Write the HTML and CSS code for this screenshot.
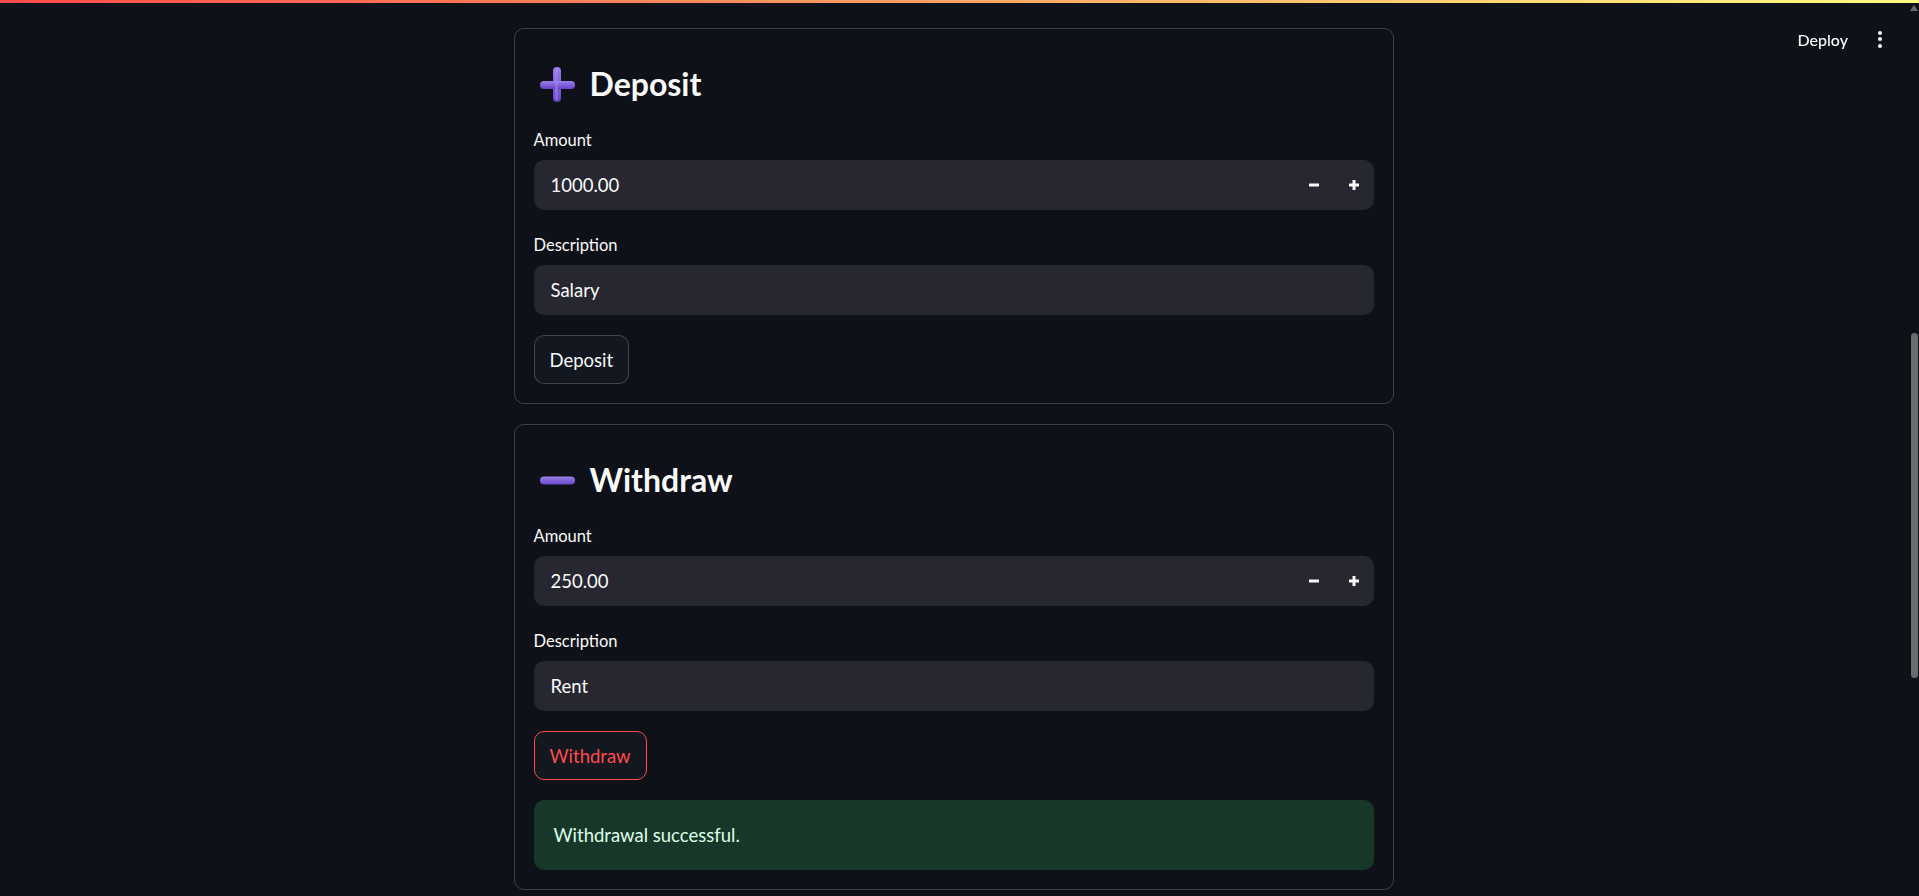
FILE: index.html
```html
<!DOCTYPE html>
<html lang="en">
<head>
<meta charset="utf-8">
<title>Bank</title>
<link rel="stylesheet" href="styles.css">
</head>
<body>
<div class="decoration"></div>
<header class="toolbar">
  <span class="deploy">Deploy</span>
  <span class="menu"><i></i><i></i><i></i></span>
</header>
<div class="app">
  <main class="main">
    <div class="block">
      <section class="card">
        <h3 class="heading">
          <svg class="emoji" width="35" height="35" viewBox="0 0 35 35">
            <defs>
              <linearGradient id="pg" x1="0" y1="0" x2="0" y2="1">
                <stop offset="0" stop-color="#9a80ea"/>
                <stop offset="0.5" stop-color="#8060da"/>
                <stop offset="1" stop-color="#6642c4"/>
              </linearGradient>
            </defs>
            <rect x="13" y="0" width="8" height="35" rx="4" fill="url(#pg)"/>
            <rect x="0" y="14" width="35" height="8" rx="4" fill="url(#pg)"/>
            <rect x="15" y="2" width="3" height="31" rx="1.5" fill="#a68cf0" opacity="0.45"/>
          </svg>
          <span>Deposit</span>
        </h3>
        <div class="field">
          <label class="label">Amount</label>
          <div class="input">
            <span class="value">1000.00</span>
            <span class="steppers">
              <span class="step"><svg width="10" height="10" viewBox="0 0 10 10"><rect x="0" y="3.5" width="10" height="3" fill="#fafafa"/></svg></span>
              <span class="step"><svg width="10" height="10" viewBox="0 0 10 10"><rect x="0" y="3.5" width="10" height="3" fill="#fafafa"/><rect x="3.5" y="0" width="3" height="10" fill="#fafafa"/></svg></span>
            </span>
          </div>
        </div>
        <div class="field">
          <label class="label">Description</label>
          <div class="input"><span class="value">Salary</span></div>
        </div>
        <div class="row">
          <button class="btn">Deposit</button>
        </div>
      </section>

      <section class="card">
        <h3 class="heading">
          <svg class="emoji" width="35" height="35" viewBox="0 0 35 35">
            <defs>
              <linearGradient id="mg" x1="0" y1="0" x2="0" y2="1">
                <stop offset="0" stop-color="#9a80ea"/>
                <stop offset="1" stop-color="#6a46c8"/>
              </linearGradient>
            </defs>
            <rect x="0" y="13.5" width="35" height="8" rx="4" fill="url(#mg)"/>
          </svg>
          <span>Withdraw</span>
        </h3>
        <div class="field">
          <label class="label">Amount</label>
          <div class="input">
            <span class="value">250.00</span>
            <span class="steppers">
              <span class="step"><svg width="10" height="10" viewBox="0 0 10 10"><rect x="0" y="3.5" width="10" height="3" fill="#fafafa"/></svg></span>
              <span class="step"><svg width="10" height="10" viewBox="0 0 10 10"><rect x="0" y="3.5" width="10" height="3" fill="#fafafa"/><rect x="3.5" y="0" width="3" height="10" fill="#fafafa"/></svg></span>
            </span>
          </div>
        </div>
        <div class="field">
          <label class="label">Description</label>
          <div class="input"><span class="value">Rent</span></div>
        </div>
        <div class="row">
          <button class="btn btn-active">Withdraw</button>
        </div>
        <div class="alert">Withdrawal successful.</div>
      </section>
    </div>
  </main>
  <aside class="scrollbar">
    <span class="arrow"></span>
    <span class="thumb"></span>
  </aside>
</div>
</body>
</html>
```

FILE: styles.css
```css
* { box-sizing: border-box; }

html, body {
  margin: 0;
  padding: 0;
  height: 100%;
  overflow: hidden;
}

body {
  background: #0e1117;
  color: #fafafa;
  font-family: "Lato", "Noto Sans", sans-serif;
}

.decoration {
  height: 3px;
  background: linear-gradient(90deg, #ff4b4b, #fffd80);
}

.toolbar {
  position: fixed;
  top: 3px;
  right: 12px;
  height: 72px;
  display: flex;
  align-items: center;
  gap: 30px;
  padding-right: 25px;
}

.deploy {
  font-size: 16px;
  font-weight: 500;
  color: #fafafa;
}

.menu {
  display: flex;
  flex-direction: column;
  gap: 2.5px;
}

.menu i {
  display: block;
  width: 4px;
  height: 4px;
  border-radius: 50%;
  background: #fafafa;
}

.app {
  display: flex;
  height: calc(100vh - 3px);
}

.main {
  flex: 1;
  display: flex;
  justify-content: center;
  padding-top: 25px;
}

.block {
  width: 880px;
  display: flex;
  flex-direction: column;
  gap: 20px;
}

.card {
  border: 1px solid rgba(250, 250, 250, 0.2);
  border-radius: 10px;
  padding: 19px;
  display: flex;
  flex-direction: column;
  gap: 20px;
}

.heading {
  margin: 0;
  padding-top: 15px;
  height: 57px;
  display: flex;
  align-items: center;
  font-size: 32px;
  font-weight: 700;
  line-height: 42px;
}

.emoji {
  margin-left: 6px;
  margin-right: 15px;
  flex: none;
}

.field {
  display: flex;
  flex-direction: column;
}

.label {
  height: 30px;
  margin-bottom: 5px;
  font-size: 16.5px;
  line-height: 30px;
  color: #fafafa;
}

.input {
  height: 50px;
  border-radius: 10px;
  background: #262730;
  display: flex;
  align-items: center;
  padding-left: 17px;
}

.value {
  flex: 1;
  font-size: 18.5px;
  color: #fafafa;
}

.steppers {
  display: flex;
  height: 100%;
}

.step {
  width: 40px;
  display: flex;
  align-items: center;
  justify-content: center;
}

.row {
  display: flex;
}

.btn {
  height: 49px;
  padding: 0 15px;
  border: 1px solid rgba(250, 250, 250, 0.2);
  border-radius: 10px;
  background: #13171f;
  color: #fafafa;
  font-family: inherit;
  font-size: 18.5px;
}

.btn-active {
  border-color: #ff4b4b;
  color: #ff4b4b;
}

.alert {
  height: 70px;
  padding: 20px;
  border-radius: 10px;
  background: #173828;
  color: #dffde9;
  font-size: 18.5px;
  line-height: 30px;
}

.scrollbar {
  width: 12px;
  flex: none;
  display: flex;
  flex-direction: column;
  align-items: center;
}

.arrow {
  margin-top: 2px;
  margin-left: 2px;
  width: 0;
  height: 0;
  border-left: 4.5px solid transparent;
  border-right: 4.5px solid transparent;
  border-bottom: 6px solid #6b6b6b;
}

.thumb {
  margin-top: 322px;
  margin-left: 2px;
  width: 7px;
  height: 345px;
  border-radius: 4px;
  background: #6c6c70;
}
```
